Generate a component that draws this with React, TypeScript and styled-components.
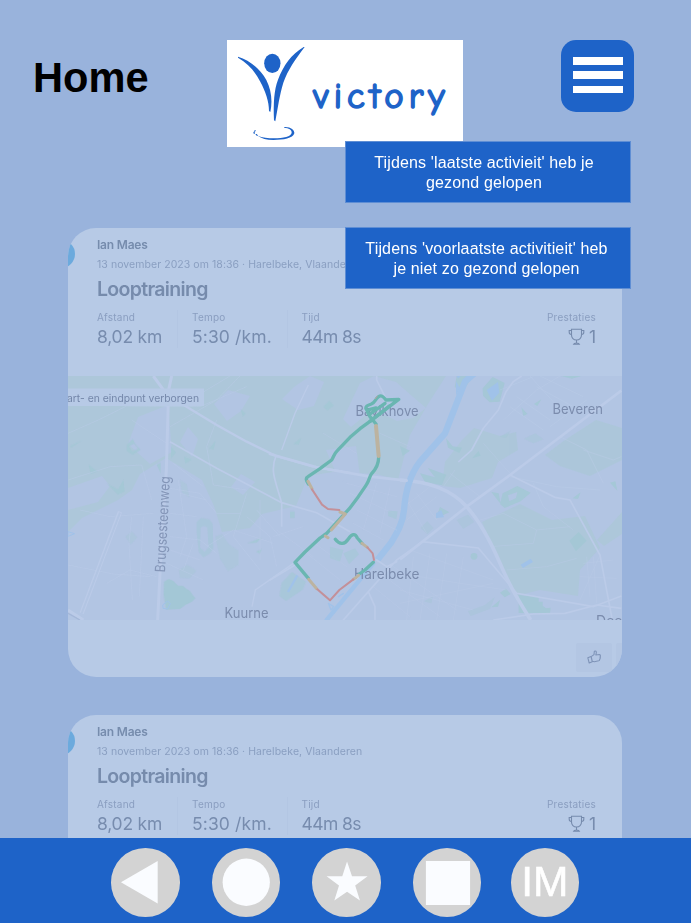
import React from 'react';
import styled, { createGlobalStyle } from 'styled-components';

const GlobalStyle = createGlobalStyle`
  * { box-sizing: border-box; }
  body { margin: 0; background: #99b3dc; font-family: 'Liberation Sans', Arial, sans-serif; }
`;

const Screen = styled.div`
  position: relative;
  width: 691px;
  height: 923px;
  overflow: hidden;
  background: #99b3dc;
`;

const Header = styled.header`
  display: flex;
  align-items: flex-start;
  height: 227.5px;
  padding: 39.5px 57px 0 33px;
`;

const PageTitle = styled.h1`
  width: 194px;
  margin: 14px 0 0;
  font-size: 41.6px;
  line-height: 48px;
  font-weight: 700;
  color: #000;
`;

const LogoSvg = styled.svg`
  display: block;
  width: 236px;
  height: 107px;
  background: #fff;
`;

const MenuButton = styled.button`
  display: flex;
  flex-direction: column;
  align-items: center;
  justify-content: center;
  gap: 6.5px;
  width: 73px;
  height: 72.5px;
  margin: 0 0 0 auto;
  padding: 0 0 1px;
  border: 0;
  border-radius: 15px;
  background: #1e63c8;
`;

const MenuBar = styled.span`
  width: 50px;
  height: 7.7px;
  background: #fff;
`;

const Toasts = styled.div`
  position: absolute;
  top: 141px;
  left: 345px;
  display: flex;
  flex-direction: column;
  gap: 24px;
  width: 286px;
`;

const Toast = styled.div<{ $shift: number }>`
  height: 62px;
  padding: 11px ${(p) => 16 + p.$shift}px 11px ${(p) => 16 - p.$shift}px;
  border: 1px solid #5f8ed4;
  background: #1e63c8;
  color: #fff;
  font-size: 16px;
  line-height: 20px;
  letter-spacing: 0.15px;
  text-align: center;
`;

const Feed = styled.main`
  display: flex;
  flex-direction: column;
  gap: 38px;
  padding: 0 69px 0 68px;
`;

const Card = styled.article`
  flex: none;
  height: 449px;
  overflow: hidden;
  border-radius: 28px;
  background: #b7cae6;
  font-family: Inter, 'Noto Sans', sans-serif;
`;

const CardInfo = styled.div`
  position: relative;
  height: 148.5px;
  padding: 9px 26px 0 29px;
`;

const Avatar = styled.span`
  position: absolute;
  left: -21px;
  top: 12.5px;
  width: 28px;
  height: 28px;
  border-radius: 50%;
  background: #6caadd;
`;

const Athlete = styled.div`
  font-size: 12px;
  line-height: 16px;
  font-weight: 600;
  letter-spacing: -0.2px;
  color: #768cad;
`;

const Meta = styled.div`
  margin-top: 4px;
  font-size: 10.5px;
  line-height: 16px;
  letter-spacing: 0.06px;
  white-space: nowrap;
  color: #8a9fc1;
`;

const ActivityTitle = styled.h2`
  margin: 3.5px 0 8px;
  font-size: 19.5px;
  line-height: 26px;
  font-weight: 600;
  letter-spacing: -0.68px;
  color: #768bac;
`;

const Stats = styled.div`
  display: flex;
`;

const Stat = styled.div<{ $width?: number; $end?: boolean }>`
  height: 39px;
  width: ${(p) => (p.$width ? `${p.$width}px` : 'auto')};
  margin-left: ${(p) => (p.$end ? 'auto' : '0')};
  text-align: ${(p) => (p.$end ? 'right' : 'left')};
`;

const Divider = styled.span<{ $gap: number }>`
  width: 1px;
  height: 38px;
  margin-right: ${(p) => p.$gap}px;
  background: #b3c6e3;
`;

const StatLabel = styled.div`
  font-size: 10px;
  line-height: 14px;
  letter-spacing: 0.22px;
  color: #8a9ec0;
`;

const StatValue = styled.div<{ $tracking?: number }>`
  display: flex;
  align-items: center;
  margin-top: 1px;
  font-size: 17.5px;
  line-height: 24px;
  letter-spacing: ${(p) => p.$tracking ?? 0}px;
  white-space: nowrap;
  color: #778cae;
`;

const Trophies = styled(StatValue)`
  justify-content: flex-end;
  gap: 4px;
`;

const MapSvg = styled.svg`
  display: block;
  width: 554px;
  height: 244px;
`;

const CardFooter = styled.footer`
  display: flex;
  gap: 4px;
  padding: 23px 0 0 507.5px;
`;

const ActionButton = styled.span`
  display: flex;
  flex: none;
  align-items: center;
  justify-content: center;
  width: 36.5px;
  height: 28.5px;
  border-radius: 2px;
  background: #b3c6e3;
`;

const NavBar = styled.nav`
  position: absolute;
  left: 0;
  right: 0;
  bottom: 0;
  display: flex;
  align-items: flex-start;
  gap: 32px;
  height: 85px;
  padding: 10px 0 0 111px;
  background: #1e63c8;
`;

const NavItem = styled.button<{ $pull?: number }>`
  display: flex;
  flex: none;
  align-items: center;
  justify-content: center;
  width: 68.5px;
  height: 68.5px;
  margin: 0 0 0 ${(p) => -(p.$pull ?? 0)}px;
  padding: 0;
  border: 0;
  border-radius: 50%;
  background: #d3d3d3;
  color: #fff;
  font: 42.5px/66px 'Liberation Sans', Arial, sans-serif;
  -webkit-text-stroke: 0.6px #fff;
`;

const NavSvg = styled.svg`
  display: block;
  width: 68.5px;
  height: 68.5px;
  fill: #fafcff;
`;

function Logo() {
  return (
    <LogoSvg viewBox="21 30 708 321" fill="#1e63c8">
      <ellipse cx="157" cy="100" rx="24.5" ry="29" />
      <path d="M54 80 C88 90 120 116 139 150 C154 180 158 213 151 246 L147 243 C147 215 137 185 120 154 C104 123 84 100 54 83Z" />
      <path d="M254 51 C226 88 204 119 190 158 C179 194 174 230 166 274 L162 271 C160 220 162 180 174 149 C190 107 214 73 251 51Z" />
      <path d="M193 291 C212 290 224 300 223 310 C219 325 190 330 160 330 C140 330 124 325 113 317 C126 323 145 325 162 325 C190 325 214 319 215 308 C216 300 206 294 193 294Z" />
      <path d="M104 301 l4 0 l-3 4 h-4Z M100 306h4l1 5h-4Z M106 312h4l5 5h-5Z" />
      <text
        x="280"
        y="234"
        textLength="394"
        lengthAdjust="spacing"
        fontFamily="'Comic Sans MS', 'Comic Neue', 'DejaVu Sans', sans-serif"
        fontSize="110"
        stroke="#1e63c8"
        strokeWidth="5"
        strokeLinejoin="round"
      >
        victory
      </text>
    </LogoSvg>
  );
}

function TrophyIcon() {
  return (
    <svg width="17" height="18" viewBox="0 0 17 18" fill="none" stroke="#768bad" strokeWidth="1.1">
      <path d="M3.5 1.2h10v5.800c0 3-2 5-5 5s-5-2-5-5z M3.500 2.500H1.200v1.800c0 1.300 1 2.200 2.300 2.200 M13.500 2.500h2.300v1.800c0 1.300-1 2.200-2.300 2.200 M8.500 12v3 M5.500 16.300c.3-1 1.200-1.300 3-1.300s2.700.3 3 1.300z" />
    </svg>
  );
}

function ThumbIcon() {
  return (
    <svg width="14" height="14" viewBox="0 0 14 14" fill="none" stroke="#7f94b8" strokeWidth="1.1" strokeLinejoin="round">
      <path d="M4.200 6.600 7 4.600 7.300 1.500c.2-.8 1.700-.7 2 .3.200 1.100-.1 2-.5 3.200l3.600-.5c1 0 1.200 1 .7 1.600.5.600.4 1.300-.1 1.700.3.600.1 1.200-.4 1.600.1.700-.2 1.200-.9 1.400l-4.300.9-2.200-.5z M.8 7.700l3.200-1.300 1.300 5.400-3.100 1.200z" />
    </svg>
  );
}

const GREEN = '#adc7da';
const PARK = '#a3c8d5';
const BASE = '#b2c5e3';
const ROAD = '#bbcbe8';
const WATER = '#a0c2e9';

function ActivityMap() {
  return (
    <MapSvg viewBox="68 376 554 244">
      <rect x="68" y="376" width="554" height="244" fill={BASE} />

      <g fill={GREEN}>
        <path d="M68 376H446L428 404 410 435 398 480 376 474 333 472 308 476 296 506 262 514 250 528 222 532 214 506 202 480 166 458 140 474 132 490 118 500 82 518 68 532Z" />
        <path d="M445 462 462 440 474 428 500 436 516 432 518 450 498 462 492 478 460 488 442 486Z" />
        <path d="M545 455 565 440 596 420 622 428V460L590 476 560 466Z" />
        <path d="M482 522 520 504 552 520 585 516 600 548 580 570 578 596 540 590 516 596 503 570Z" />
        <path d="M597 540 622 512V534L604 546Z" />
      </g>
      <g fill={BASE}>
        <path d="M138 417 168 405 172 452 150 464 128 444Z M214 404l14-14 22 6-9 15-14 10z M282 399l12-12 16-11 14 6-10 24-16 4z M180 442l8-15 10 12-6 18z" />
        <path d="M360 383l14-7 22 6 16 14 14 12-13 10-16 3-24-12-22 18-8-8z M231 487l10-13 14 8-12 13z M68 488l34-12 8 10-12 16-30 8z M326 450l30-4 4 30-20 6z" />
      </g>
      <g transform="translate(60 370) scale(.33333)">
        <g fill={PARK} opacity=".8">
          <path d="M312 635l14-8 14 6 14 14 14 0 12 10 10 6 8 12 8 10-10 10-20 10-16 12-42 2-7-45z" fill="#9fc7d2" />
          <path d="M665 638l31-32 42 29-10 24-50 34-20-15z" opacity=".8" />
          <path d="M410 456l14-12 24 4 10 14 2 74-10 14-20 12-14-16-6-60z M422 472l-2 60 14 14 12-14-4-60-10-4z" fillRule="evenodd" opacity=".7" />
          <path d="M200 225l18-18 10 18 14 14-24 16-18-12z M206 229l12 16 16-10-12-14z M333 229l15 18-15 18z M372 260l24 8-20 13z M86 284l26 20-20 8z M290 284l12-6v32z M447 236l20-24-6 26z M790 110l18-18 14 14-20 15z M542 118l16 12-10 10z M690 424h14v20h-14z M560 520l46-18-16 16z M588 545l18-8-6 15z M30 228l40-18-36 22z M140 340l34 18 16-28 4 34-20 10z M700 222l24-18-8 20z" />
          <path d="M466 500l20-8 20 30 30 20v42l-32 20-24-38z M196 500l20-16 16 18-20 22z M356 600l26-16 28 18-22 24-28-2z M360 330l20 12 8 40-22-14z" opacity=".45" />
        </g>
        <g stroke={ROAD} fill="none">
          <g strokeWidth="2" opacity=".7">
            <path d="M24 330 150 290 245 285 275 390M24 190 115 150 200 108 420 110 560 50M215 150 320 220M470 150 440 230 460 345 560 360M440 530 520 480 640 520M140 640 210 600 290 620M330 170 470 90 540 18M560 370 520 500 600 600M24 585 160 612 270 620M380 100 440 60 510 18M640 500 730 470M60 420 150 440 280 430M355 330 380 500 360 560M300 350 420 370 470 430 540 430" />
            <path d="M215 440l-8 80 10 170M250 440l-12 240M330 500l90 10 50 40M330 540l90 30M320 580l110 50M400 520l-30 80M560 440l70 60 20 90M590 420l70 80M600 390v180M340 280l90 70M360 370l80 20M330 430l80 10" />
          </g>
          <path d="M280 18 325 80 M335 18 326 60 319 300 300 610 293 750" strokeWidth="9" />
          <path d="M350 92 470 165 560 215 648 258 760 290 870 309" strokeWidth="7" />
          <path d="M330 215 470 295 575 350 665 398 770 428 870 485 M648 258C630 300 645 330 665 398V470" strokeWidth="5" />
          <path d="M700 580 586 660 576 710 M665 240 705 130 745 45" strokeWidth="4" />
          <path d="M180 425 65 730" strokeWidth="13" />
          <path d="M180 428 65 730" strokeWidth="6" stroke={BASE} />
          <path d="M24 720 70 750" strokeWidth="9" />
          <path d="M24 730 60 750" strokeWidth="4" stroke="#a4b7d8" />
        </g>
        <path d="M24 485 44 491 24 499z M308 705l15-12 8 8-8 16-14-2z" fill="none" stroke={WATER} strokeWidth="3" />
        <path d="M684 666 712 616 M800 750 870 662" stroke={WATER} strokeWidth="7" />
      </g>

      <g transform="translate(400 370) scale(.33333)">
        <g fill={PARK} opacity=".85">
          <path d="M170 18h48l-26 42-28-8z M248 55l30-34 36 18-15 56-30 2-20-20z" />
          <path d="M308 370l44-22 40 20-30 26-48 20-14-12z M324 376l28-10-4 18-20 10z M274 366l22 4 6 32z M508 512l28-26 24 26-32 32z M356 675l60 6v14h12v12l10 8 14-2-2 16h-94z M274 712l26-22-6 20z M300 668l18-12 14 16-18 10z" fillRule="evenodd" />
          <path d="M60 310l45 12-22-28 56 20-14 32-50-10z M138 205l20 24 28 4-8 16-34-16z M364 112l18 20-12 6z M402 102l22-14-12 20z M0 228l30 14-22 16z M518 385l24-18-8 20z M216 265l20-22 6 14z M484 18h60l-28 8z M108 445l12-34 28 16z M630 338l22 24-6-28z" />
          <circle cx="222" cy="559" r="10" />
          <path d="M62 474l20-20 18 20-18 18z M170 450l34-16 18 22-32 20z M72 694l26-14-4 20z M204 724l50-18 30-24-14 34-58 22z M300 200l32-18-14 22z M372 206l34-16 24 18-30 12z" opacity=".5" />
        </g>
        <g stroke={ROAD} fill="none">
          <g strokeWidth="2" opacity=".65">
            <path d="M310 150 410 60 480 18M350 80 450 150M330 110 430 180M390 18 500 140M410 50 520 110M420 18 550 80M300 60 400 20M450 170 560 90M550 240 640 270 664 260M330 320 470 350 600 360M400 340 430 410 520 480M240 450 310 430 410 480 510 470M410 480 400 520 270 530M320 600 440 590 530 565M150 310 240 380M130 350 165 300M250 220 330 310M480 200 560 240 610 340M600 555 540 690M550 580 640 570M540 620 650 625M560 560 570 680M580 560 590 700" />
            <path d="M20 390l60 100M50 370l60 80M0 420l90-70M20 450l90-70M0 610l180 30 140 20M0 660l220 60M40 560l-20 190M90 550l-30 200M140 550l-30 200M190 560l-30 190M0 700l280-60M30 540l250 90" />
          </g>
          <path d="M0 568 200 410 330 315 664 62" strokeWidth="8" />
          <path d="M0 330C100 335 160 365 200 410S270 510 300 580 355 690 392 750" strokeWidth="11" />
          <path d="M330 315 465 382 510 390 600 555 636 745 M65 515 235 534 350 670 580 710 664 678 M280 750 400 732 495 730 590 705 664 715" strokeWidth="5" />
          <path d="M175 276 215 240 250 175 295 120 318 65 340 35 365 18" strokeWidth="5" />
        </g>
        <g fill={WATER}>
          <path d="M260 60l34-24 4 32-22 24z M362 584l30-18 7 10-30 18z M108 430l16-10 8 22-24 2z M168 34l12 20-12 22z M170 18h12l-8 8z" />
        </g>
      </g>

      <g transform="translate(270 380) scale(.33333)" fill="none" strokeLinecap="round" strokeLinejoin="round">
        <path d="M618 -24 585 5 525 160 450 245C415 290 405 350 402 390S380 460 362 490L322 540" stroke={WATER} strokeWidth="19" strokeLinecap="butt" />
        <path d="M310 550 170 720" stroke={WATER} strokeWidth="13" />
        <path d="M0 222 140 262 300 290 410 302" stroke={ROAD} strokeWidth="8" />
        <path d="M455 487 380 540 295 635 220 720M0 600 75 555M295 635 315 680V720M320 540 350 560 380 545M320 -30V0L345 50" stroke={ROAD} strokeWidth="5" />
        <path d="M230 310l150 40M240 340l130 60M260 390l120 60M250 430l90 50M320 310l-40 140M360 320l-30 140M120 480l110 80M110 520l100 80M330 580l180 130M310 620l110 90M370 560l190 130M160 160l100 60M330 160l90 40M20 450l110 80" stroke={ROAD} strokeWidth="2" opacity=".6" />
        <path d="M355 392l28 2-4 24-25-10z M180 500l40 10-10 35-30-10z M220 520l35-15 12 18-30 30z" fill={PARK} opacity=".6" />
        <path d="M175 670l16 10-8 10z M205 650l15-10" stroke={WATER} strokeWidth="4" />
      </g>

      <g fontFamily="Inter, 'Noto Sans', sans-serif" fontSize="14.2" fill="#7b8cad">
        <text x="355.500" y="416" textLength="63" lengthAdjust="spacingAndGlyphs">Bavikhove</text>
        <text x="552.500" y="413.800" textLength="50.500" lengthAdjust="spacingAndGlyphs">Beveren</text>
        <text x="354" y="578.700" textLength="65.500" lengthAdjust="spacingAndGlyphs">Harelbeke</text>
        <text x="224.500" y="617.700" textLength="44" lengthAdjust="spacingAndGlyphs">Kuurne</text>
        <text x="596" y="626" textLength="50" lengthAdjust="spacingAndGlyphs">Deerlijk</text>
        <text transform="translate(165 572.500) rotate(-87)" textLength="96" lengthAdjust="spacingAndGlyphs" fill="#8496b8">Brugsesteenweg</text>
      </g>

      <g transform="translate(270 380) scale(.33333)" fill="none" strokeLinecap="round" strokeLinejoin="round">
        <g stroke="#6ab6b1" strokeWidth="10">
          <path d="M115 312C108 300 106 294 114 290L150 266 185 240C192 228 192 222 202 212L240 172 270 146 300 124 386 58 348 60C340 50 334 44 326 50 314 58 318 66 304 72 292 76 286 80 288 86S296 92 300 88L318 84 M292 96 300 110 318 132" />
          <path d="M300 124 358 78 M300 102 345 70" />
          <path d="M326 232C326 250 320 266 304 282 298 290 298 302 288 316L265 350 238 386 170 460 150 474 105 516 75 547 115 595 M196 478C210 497 225 492 235 477S255 458 262 474L276 490 M310 547 285 570 268 582" />
        </g>
        <g stroke="#bcb3a0" strokeWidth="12">
          <path d="M318 138 326 228" />
          <path d="M114 304 126 326M210 396 226 402 184 450M166 468 174 473M116 598 140 626M276 490 292 502M266 586 250 598" strokeWidth="9" />
        </g>
        <path d="M126 328 156 374 174 387 208 390 M142 628 180 661 208 630 250 598 M292 502 308 520 312 540" stroke="#c39099" strokeWidth="6" />
        <path d="M316 56 322 48" stroke="#b5a2a0" strokeWidth="3" />
      </g>

      <rect x="68" y="388.500" width="136" height="17.500" fill="#b7cae6" />
      <text x="67" y="401.500" textLength="132" lengthAdjust="spacingAndGlyphs" fontFamily="Inter, 'Noto Sans', sans-serif" fontSize="10.8" fill="#7487a9">
        art- en eindpunt verborgen
      </text>
    </MapSvg>
  );
}

function ActivityCard() {
  return (
    <Card>
      <CardInfo>
        <Avatar />
        <Athlete>Ian Maes</Athlete>
        <Meta>13 november 2023 om 18:36 · Harelbeke, Vlaanderen</Meta>
        <ActivityTitle>Looptraining</ActivityTitle>
        <Stats>
          <Stat $width={80}>
            <StatLabel>Afstand</StatLabel>
            <StatValue $tracking={-0.22}>8,02 km</StatValue>
          </Stat>
          <Divider $gap={14} />
          <Stat $width={95}>
            <StatLabel>Tempo</StatLabel>
            <StatValue $tracking={0.12}>5:30 /km.</StatValue>
          </Stat>
          <Divider $gap={13.5} />
          <Stat>
            <StatLabel>Tijd</StatLabel>
            <StatValue $tracking={-0.6}>44m 8s</StatValue>
          </Stat>
          <Stat $end>
            <StatLabel>Prestaties</StatLabel>
            <Trophies>
              <TrophyIcon />1
            </Trophies>
          </Stat>
        </Stats>
      </CardInfo>
      <ActivityMap />
      <CardFooter>
        <ActionButton>
          <ThumbIcon />
        </ActionButton>
        <ActionButton />
      </CardFooter>
    </Card>
  );
}

export default function App() {
  return (
    <Screen>
      <GlobalStyle />
      <Header>
        <PageTitle>Home</PageTitle>
        <Logo />
        <MenuButton aria-label="Menu">
          <MenuBar />
          <MenuBar />
          <MenuBar />
        </MenuButton>
      </Header>
      <Feed>
        <ActivityCard />
        <ActivityCard />
      </Feed>
      <Toasts>
        <Toast $shift={4}>Tijdens 'laatste activieit' heb je gezond gelopen</Toast>
        <Toast $shift={1.5}>Tijdens 'voorlaatste activitieit' heb je niet zo gezond gelopen</Toast>
      </Toasts>
      <NavBar>
        <NavItem>
          <NavSvg viewBox="0 0 69 69">
            <path d="M10 34.500 47 13v43z" />
          </NavSvg>
        </NavItem>
        <NavItem>
          <NavSvg viewBox="0 0 69 69">
            <circle cx="34.500" cy="34.500" r="23.800" />
          </NavSvg>
        </NavItem>
        <NavItem>
          <NavSvg viewBox="0 0 69 69">
            <path d="M35.300 13.500 40.300 28.400H56L43.500 37.800 48.300 52.800 35.300 44 22.500 52.800 27.200 37.800 14.700 28.400H30.500z" />
          </NavSvg>
        </NavItem>
        <NavItem>
          <NavSvg viewBox="0 0 69 69">
            <path d="M13 13h44.500v44.500H13z" />
          </NavSvg>
        </NavItem>
        <NavItem $pull={2.5}>IM</NavItem>
      </NavBar>
    </Screen>
  );
}
